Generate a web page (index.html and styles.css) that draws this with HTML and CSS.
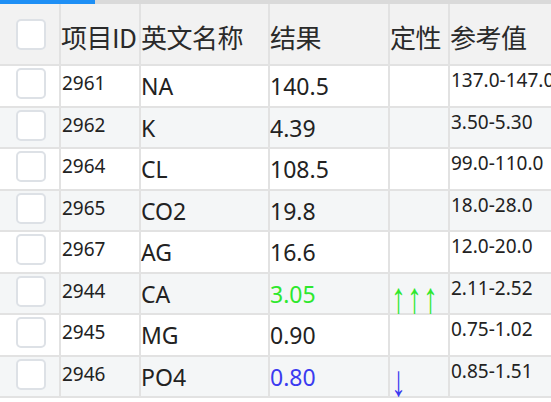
FILE: index.html
```html
<!DOCTYPE html>
<html lang="zh">
<head>
<meta charset="utf-8">
<link rel="stylesheet" href="styles.css">
</head>
<body>
<div class="scroll"><div class="thumb"></div></div>
<div class="table">
  <div class="row head">
    <div class="cell chk"><span class="box"></span></div>
    <div class="cell">项目ID</div>
    <div class="cell">英文名称</div>
    <div class="cell">结果</div>
    <div class="cell">定性</div>
    <div class="cell">参考值</div>
  </div>
  <div class="row tall">
    <div class="cell chk"><span class="box"></span></div>
    <div class="cell id">2961</div>
    <div class="cell name">NA</div>
    <div class="cell val">140.5</div>
    <div class="cell flag"></div>
    <div class="cell ref">137.0-147.0</div>
  </div>
  <div class="row alt">
    <div class="cell chk"><span class="box"></span></div>
    <div class="cell id">2962</div>
    <div class="cell name">K</div>
    <div class="cell val">4.39</div>
    <div class="cell flag"></div>
    <div class="cell ref">3.50-5.30</div>
  </div>
  <div class="row tall">
    <div class="cell chk"><span class="box"></span></div>
    <div class="cell id">2964</div>
    <div class="cell name">CL</div>
    <div class="cell val">108.5</div>
    <div class="cell flag"></div>
    <div class="cell ref">99.0-110.0</div>
  </div>
  <div class="row alt">
    <div class="cell chk"><span class="box"></span></div>
    <div class="cell id">2965</div>
    <div class="cell name">CO2</div>
    <div class="cell val">19.8</div>
    <div class="cell flag"></div>
    <div class="cell ref">18.0-28.0</div>
  </div>
  <div class="row tall">
    <div class="cell chk"><span class="box"></span></div>
    <div class="cell id">2967</div>
    <div class="cell name">AG</div>
    <div class="cell val">16.6</div>
    <div class="cell flag"></div>
    <div class="cell ref">12.0-20.0</div>
  </div>
  <div class="row alt">
    <div class="cell chk"><span class="box"></span></div>
    <div class="cell id">2944</div>
    <div class="cell name">CA</div>
    <div class="cell val high">3.05</div>
    <div class="cell flag high"><span class="arrows">↑↑↑</span></div>
    <div class="cell ref">2.11-2.52</div>
  </div>
  <div class="row tall">
    <div class="cell chk"><span class="box"></span></div>
    <div class="cell id">2945</div>
    <div class="cell name">MG</div>
    <div class="cell val">0.90</div>
    <div class="cell flag"></div>
    <div class="cell ref">0.75-1.02</div>
  </div>
  <div class="row alt">
    <div class="cell chk"><span class="box"></span></div>
    <div class="cell id">2946</div>
    <div class="cell name">PO4</div>
    <div class="cell val low">0.80</div>
    <div class="cell flag low"><span class="arrows">↓</span></div>
    <div class="cell ref">0.85-1.51</div>
  </div>
</div>
</body>
</html>
```

FILE: styles.css
```css
html, body {
  margin: 0;
  padding: 0;
}
body {
  width: 551px;
  height: 402px;
  overflow: hidden;
  background: #ffffff;
  font-family: "Noto Sans", "Noto Sans CJK SC", sans-serif;
  color: #222222;
}
.scroll {
  display: flex;
  height: 4px;
  background: #dadada;
}
.thumb {
  width: 95px;
  background: #1e8ff5;
}
.table {
  width: 600px;
}
.row {
  display: grid;
  grid-template-columns: 61px 80px 129px 120px 60px 150px;
  height: 41px;
}
.row.tall {
  height: 42px;
}
.row.alt {
  background: #f4f6f7;
}
.row.head {
  height: 62px;
  background: #f2f2f2;
}
.cell {
  box-sizing: border-box;
  border-right: 2px solid #e2e2e2;
  border-bottom: 2px solid #e2e2e2;
  display: flex;
  align-items: center;
  white-space: nowrap;
  overflow: hidden;
}
.head .cell {
  font-family: "Noto Sans CJK SC", sans-serif;
  font-size: 26px;
  letter-spacing: -0.5px;
  color: #2a2a2a;
  padding-top: 4px;
}
.chk {
  padding-left: 16px;
  align-items: flex-start;
  padding-top: 2px;
}
.head .chk {
  align-items: center;
  padding-top: 0;
}
.box {
  box-sizing: border-box;
  width: 30px;
  height: 31px;
  border: 2px solid #dde1e6;
  border-radius: 5px;
  background: #ffffff;
}
.id {
  font-size: 19px;
  align-items: flex-start;
  padding-top: 4px;
  padding-left: 1px;
}
.name, .val {
  font-size: 23px;
}
.ref {
  font-size: 19px;
  align-items: flex-start;
  padding-top: 1px;
  padding-left: 1px;
}
.flag {
  font-family: "Liberation Sans", sans-serif;
  font-size: 30px;
  line-height: 1;
  align-items: flex-end;
  padding-left: 1px;
  overflow: visible;
}
.arrows {
  display: inline-block;
  letter-spacing: 1px;
  margin-bottom: -7px;
  transform: scaleY(1.45);
  transform-origin: 50% 100%;
}
.high {
  color: #2ee82e;
}
.low {
  color: #3b3bf0;
}
```
